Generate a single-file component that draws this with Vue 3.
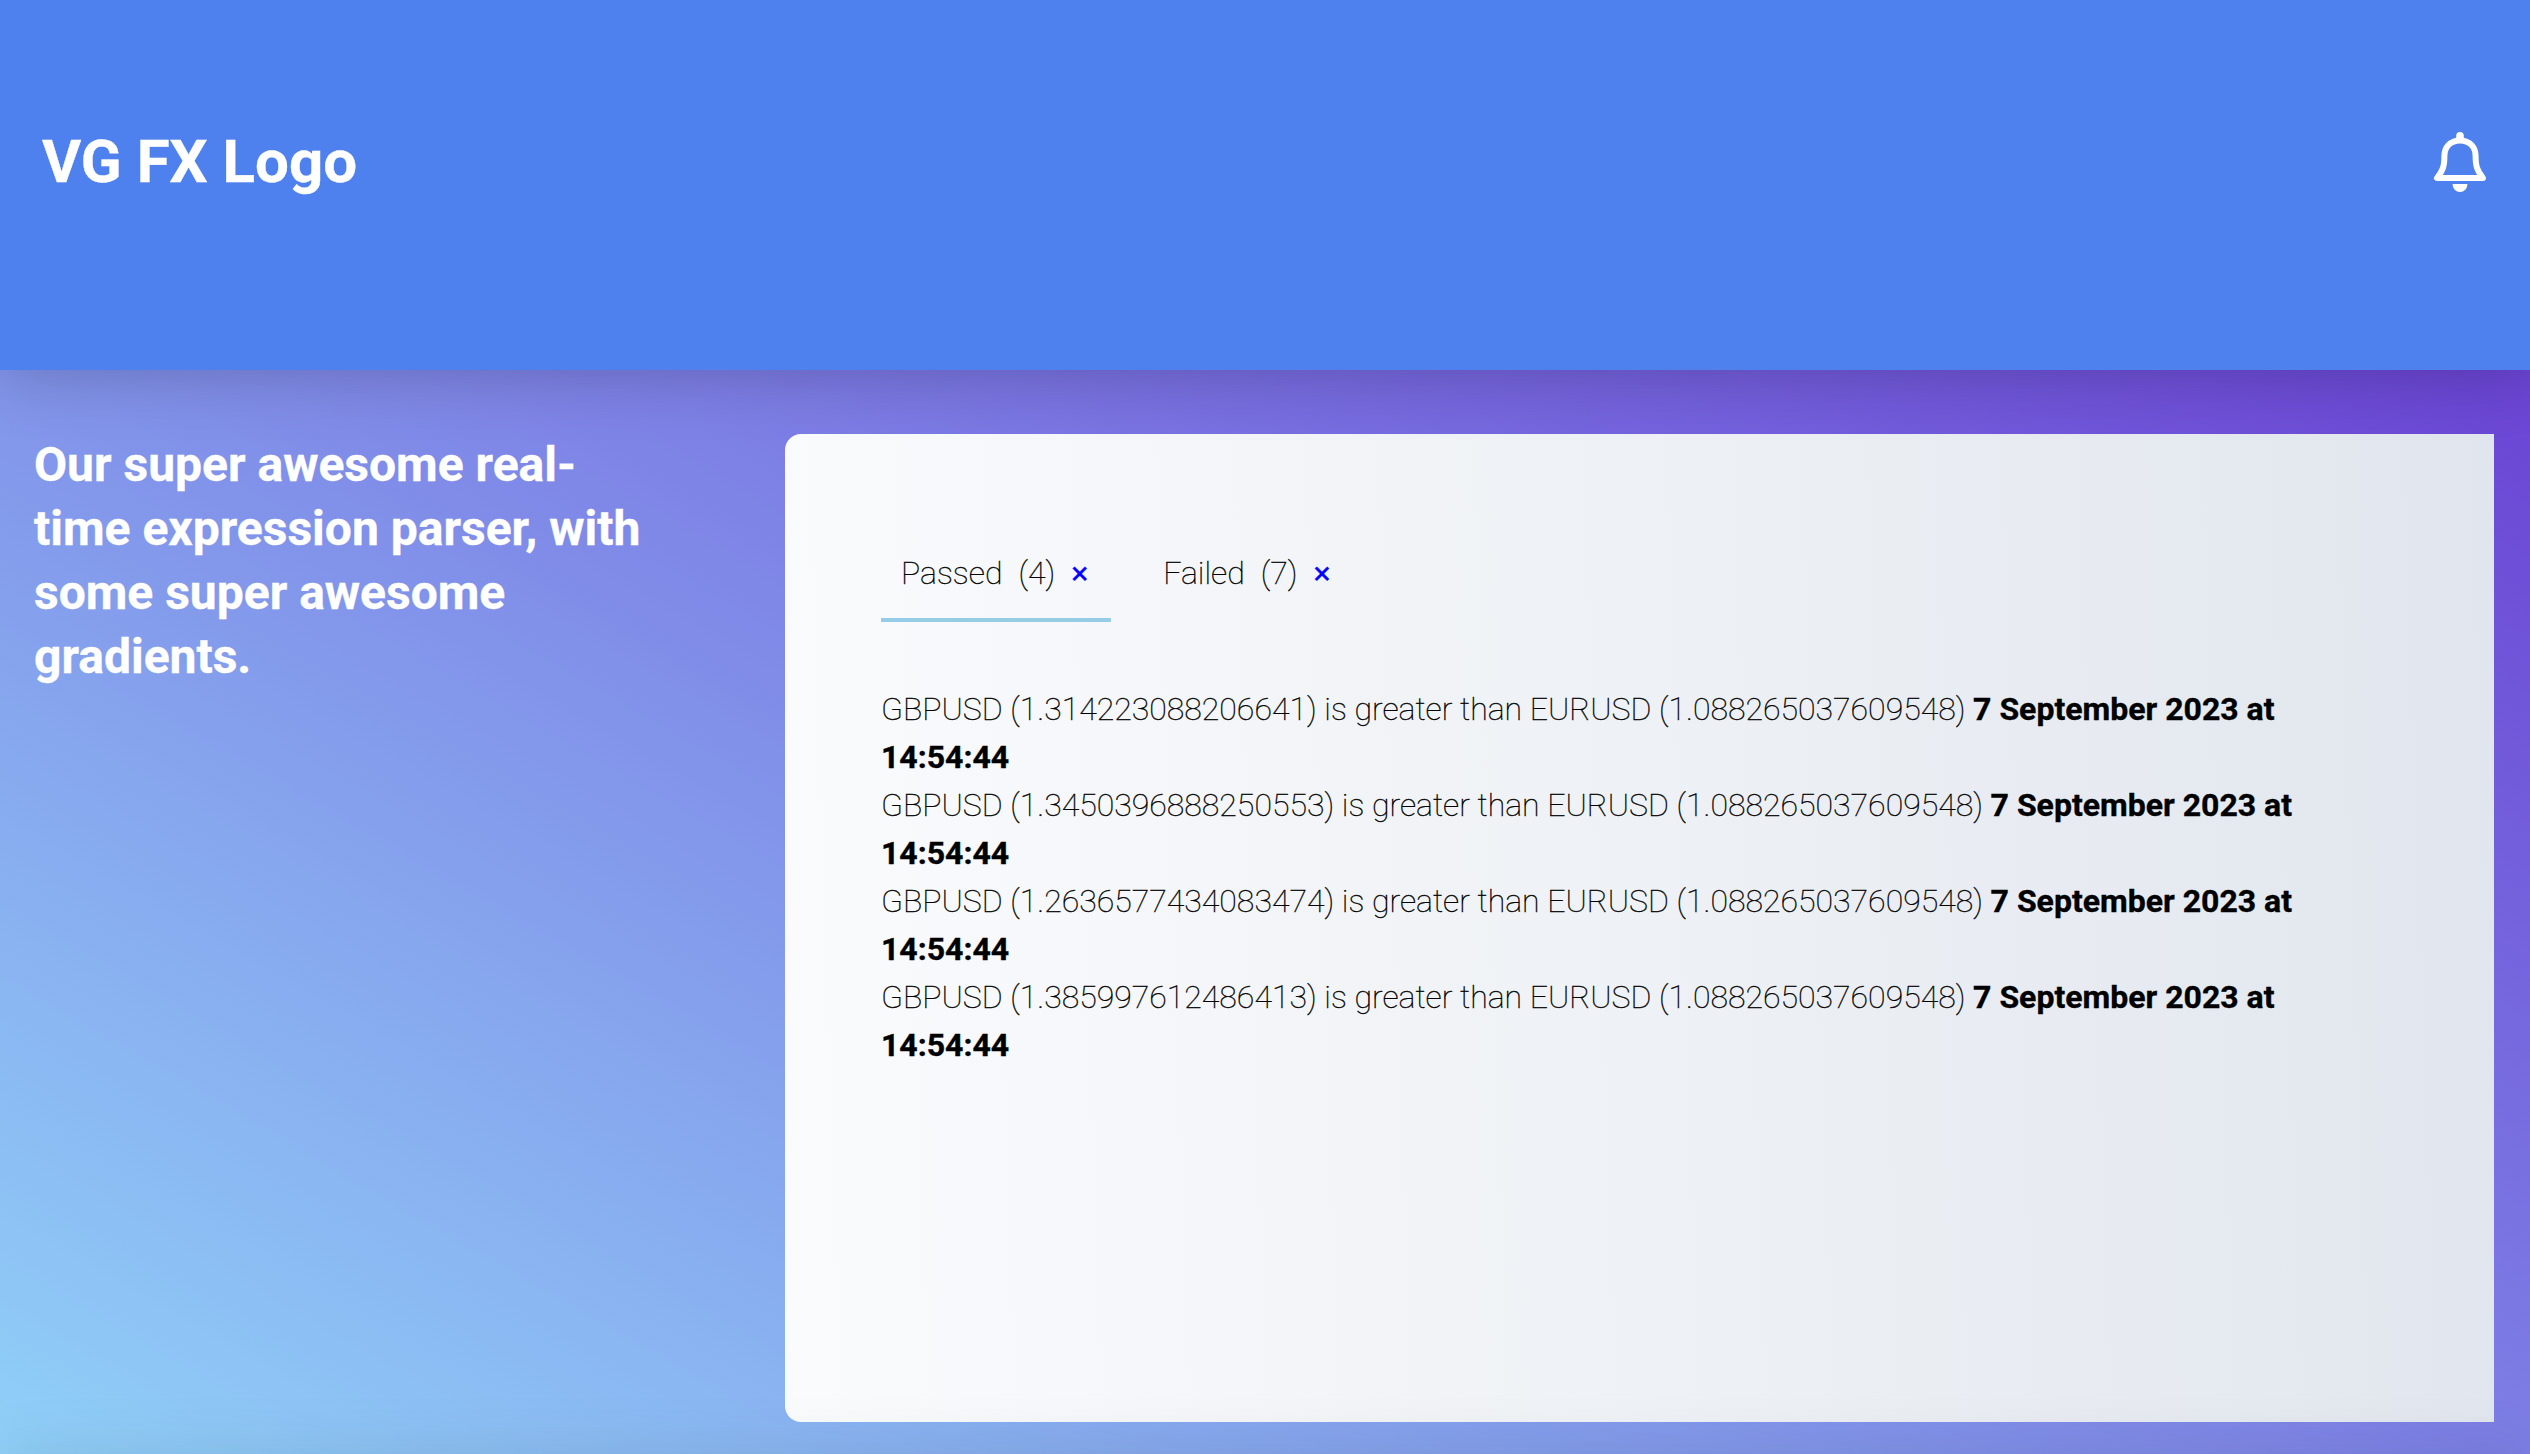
<script setup>
import { ref } from 'vue'

const active = ref('Passed')
const tabs = [
  { name: 'Passed', count: 4 },
  { name: 'Failed', count: 7 },
]
const results = ['1.314223088206641', '1.3450396888250553', '1.2636577434083474', '1.385997612486413']
</script>

<template>
  <div class="page">
    <header class="header">
      <h1 class="logo">VG FX Logo</h1>
      <svg class="bell" viewBox="0 0 60 64" width="60" height="64" aria-label="Notifications">
        <path
          d="M30 10.500C20 10.500 14.400 17.500 14.400 26C14.400 36 13 40.500 7 48H53C47 40.500 45.600 36 45.600 26C45.600 17.500 40 10.500 30 10.500Z"
          fill="none" stroke="#fff" stroke-width="6" stroke-linecap="round" stroke-linejoin="round"
        />
        <path d="M26.200 5.800A3.800 3.800 0 0 1 33.800 5.800V10H26.200Z" fill="#fff" />
        <path d="M22.500 54H37.500A7.500 8 0 0 1 22.500 54Z" fill="#fff" />
      </svg>
    </header>
    <main class="main">
      <h2 class="intro">Our super awesome real-time expression parser, with some super awesome gradients.</h2>
      <section class="card">
        <nav class="tabs">
          <div v-for="t in tabs" :key="t.name" class="tab" :class="{ active: t.name === active }" @click="active = t.name">
            <span>{{ t.name }}</span><span class="count">({{ t.count }})</span><span class="close">×</span>
          </div>
        </nav>
        <div class="results">
          <p v-for="r in results" :key="r">
            GBPUSD ({{ r }}) is greater than EURUSD (1.088265037609548) <b>7 September 2023 at 14:54:44</b>
          </p>
        </div>
      </section>
    </main>
    <footer class="footer"></footer>
  </div>
</template>

<style>
body {
  margin: 0;
}
</style>

<style scoped>
.page {
  box-sizing: border-box;
  height: 1454px;
  overflow: hidden;
  background: linear-gradient(to top right, #90d0f8 0%, #7d7fe5 50%, #6430ce 100%);
  font-family: Roboto, sans-serif;
  font-size: 32px;
  line-height: 48px;
  font-weight: 100;
  color: #000;
  -webkit-text-stroke: 0.35px currentColor;
}
.header {
  position: relative;
  box-sizing: border-box;
  height: 370px;
  padding: 0 40px 46px 42px;
  display: flex;
  align-items: center;
  justify-content: space-between;
  background: #4f81ee;
  box-shadow: 0 0 64px rgba(0, 0, 0, 0.22);
}
.logo {
  margin: 0;
  color: #fff;
  font-size: 60px;
  font-weight: 700;
}
.bell {
  display: block;
}
.main {
  box-sizing: border-box;
  height: 1084px;
  padding: 64px 36px 32px 34px;
  display: flex;
  justify-content: space-between;
}
.intro {
  width: 620px;
  margin: -1px 0 0;
  color: #fff;
  font-size: 48px;
  line-height: 64px;
  font-weight: 700;
}
.card {
  box-sizing: border-box;
  width: 1709px;
  height: 988px;
  padding: 96px;
  border-radius: 16px 0 0 16px;
  background: linear-gradient(88deg, #fafbfd, #eef1f5 50%, #e1e6ee);
}
.tabs {
  display: flex;
  gap: 32px;
}
.tab {
  display: flex;
  gap: 16px;
  height: 92px;
  padding: 0 20px;
  line-height: 86px;
  box-sizing: border-box;
  border-bottom: 4px solid transparent;
}
.tab.active {
  border-bottom-color: #97cce6;
}
.close {
  width: 20px;
  color: #00f;
  font-weight: 400;
}
.results {
  margin-top: 63px;
}
.results p {
  margin: 0;
}
.results b {
  font-weight: 700;
}
.footer {
  position: relative;
  height: 100px;
  box-shadow: 0 0 64px rgba(0, 0, 0, 0.1);
}
</style>
